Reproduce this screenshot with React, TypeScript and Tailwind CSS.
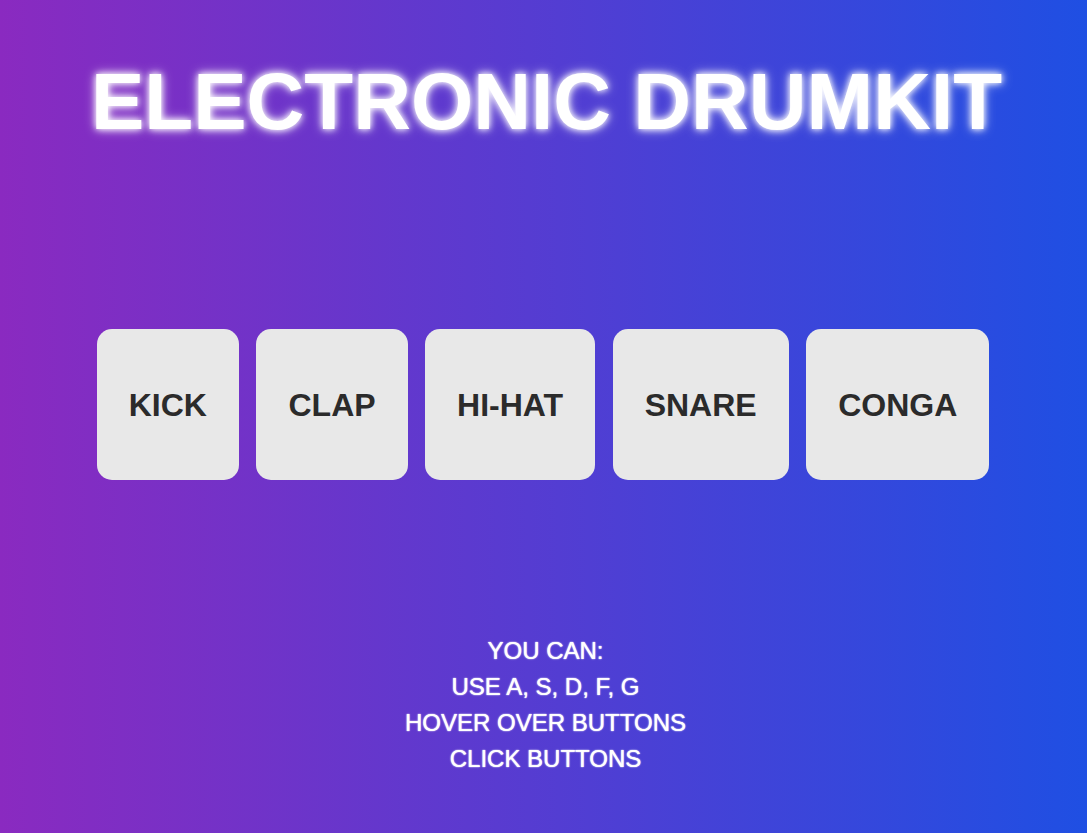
export default function App() {
  const pads = ["KICK", "CLAP", "HI-HAT", "SNARE", "CONGA"];
  return (
    <div
      className="w-full min-h-[833px] h-[833px] overflow-hidden flex flex-col items-center bg-[linear-gradient(to_right,#8a2ac0,#1f4fe3)]"
      style={{ fontFamily: '"Liberation Sans", Arial, Helvetica, sans-serif' }}
    >
      <h1 className="mt-[62px] text-[80px] leading-[80px] font-bold text-white [text-shadow:0_0_6px_#fff,0_0_12px_rgba(255,255,255,0.8)] ml-[6px]">
        ELECTRONIC DRUMKIT
      </h1>
      <div className="mt-[187px] flex gap-[17.5px] mr-[1px]">
        {pads.map((p) => (
          <button
            key={p}
            className="h-[151px] px-8 rounded-[15px] bg-[#e8e8e8] text-[#2b2b2b] text-[32px] font-bold"
          >
            {p}
          </button>
        ))}
      </div>
      <div className="mt-[153px] ml-[4px] text-white text-[24px] leading-[36px] text-center [text-shadow:0_0_1px_#fff,0_0_2px_rgba(255,255,255,0.6)]">
        <div>YOU CAN:</div>
        <div>USE A, S, D, F, G</div>
        <div>HOVER OVER BUTTONS</div>
        <div>CLICK BUTTONS</div>
      </div>
    </div>
  );
}
